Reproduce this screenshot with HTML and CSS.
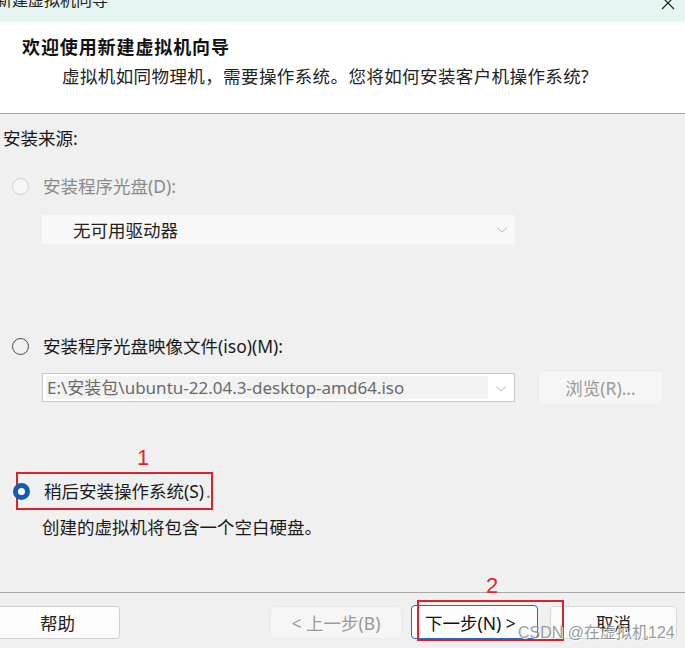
FILE: index.html
```html
<!DOCTYPE html>
<html lang="zh-CN">
<head>
<meta charset="utf-8">
<link rel="stylesheet" href="styles.css">
</head>
<body>
<div class="window">
  <div class="titlebar">
    <span class="title">新建虚拟机向导</span>
    <svg class="close" width="14" height="14" viewBox="0 0 14 14"><path d="M1 -3 L13 9 M13 -3 L1 9" stroke="#222" stroke-width="1.2" fill="none"/></svg>
  </div>
  <div class="header">
    <div class="h-title">欢迎使用新建虚拟机向导</div>
    <div class="h-sub">虚拟机如同物理机，需要操作系统。您将如何安装客户机操作系统?</div>
  </div>
  <div class="content">
    <div class="source-label">安装来源:</div>
    <div class="option opt-disc">
      <span class="radio disabled"></span>
      <span class="label muted">安装程序光盘(D):</span>
    </div>
    <div class="combo combo-disabled">
      <span class="combo-text">无可用驱动器</span>
      <svg class="chev" width="12" height="8" viewBox="0 0 12 8"><path d="M1 1.5 L6 6 L11 1.5" stroke="#b8b8b8" stroke-width="1" fill="none"/></svg>
    </div>
    <div class="option opt-iso">
      <span class="radio"></span>
      <span class="label">安装程序光盘映像文件(iso)(M):</span>
    </div>
    <div class="iso-row">
      <div class="combo combo-iso">
        <span class="combo-field">E:\安装包\ubuntu-22.04.3-desktop-amd64.iso</span>
        <svg class="chev" width="12" height="8" viewBox="0 0 12 8"><path d="M1 1.5 L6 6 L11 1.5" stroke="#b8b8b8" stroke-width="1" fill="none"/></svg>
      </div>
      <div class="btn browse">浏览(R)...</div>
    </div>
    <div class="later-wrap">
      <span class="mark mark-1">1</span>
      <div class="option opt-later">
        <span class="radio checked"></span>
        <span class="label">稍后安装操作系统(S)<span class="dot">.</span></span>
      </div>
    </div>
    <div class="desc">创建的虚拟机将包含一个空白硬盘。</div>
  </div>
  <div class="footer">
    <div class="btn help">帮助</div>
    <div class="btn back">&lt; 上一步(B)</div>
    <div class="btn next">下一步(N) &gt;</div>
    <div class="btn cancel">取消</div>
    <span class="mark mark-2">2</span>
    <span class="redbox redbox-2"></span>
    <span class="watermark">CSDN @在虚拟机124</span>
  </div>
</div>
</body>
</html>
```

FILE: styles.css
```css
* { box-sizing: border-box; }
html, body { margin: 0; padding: 0; }
body {
  width: 685px;
  height: 648px;
  overflow: hidden;
  background: #f0f0f0;
  font-family: "Noto Sans", "Noto Sans CJK SC", sans-serif;
  color: #1a1a1a;
}
.window { width: 685px; height: 648px; display: flex; flex-direction: column; }

.titlebar {
  height: 22px;
  background: #e6f5f1;
  position: relative;
  overflow: hidden;
  flex: none;
}
.title {
  display: block;
  margin-top: -10px;
  margin-left: -4px;
  font-size: 16px;
  line-height: 20px;
  color: #222;
}
.close { position: absolute; right: 10px; top: 0; }

.header {
  height: 92px;
  background: #ffffff;
  border-bottom: 1px solid #a7a7a7;
  flex: none;
  padding-top: 14px;
}
.h-title {
  margin-left: 22px;
  font-size: 18px;
  font-weight: bold;
  line-height: 22px;
  letter-spacing: 0.9px;
  color: #111;
}
.h-sub {
  margin-left: 62px;
  margin-top: 7px;
  font-size: 17.5px;
  line-height: 22px;
  letter-spacing: 0.4px;
  color: #222;
}

.content {
  flex: none;
  height: 478px;
  background: #f0f0f0;
  display: flex;
  flex-direction: column;
}
.source-label {
  margin-top: 12px;
  margin-left: 3px;
  font-size: 17.5px;
  line-height: 24px;
}
.option {
  display: flex;
  align-items: center;
  height: 24px;
  font-size: 17.5px;
}
.opt-disc { margin-top: 24px; margin-left: 12px; }
.opt-iso { margin-top: 90px; margin-left: 12px; }
.label { margin-left: 14px; line-height: 24px; white-space: nowrap; }
.label.muted { color: #8a8a8a; }

.radio {
  width: 17px;
  height: 17px;
  border-radius: 50%;
  border: 1px solid #4a4a4a;
  background: transparent;
  flex: none;
}
.radio.disabled { border-color: #cfcfcf; background: #f6f6f6; }
.radio.checked {
  border: 5px solid #0f5cb3;
  background: #ffffff;
}

.combo {
  position: relative;
  display: flex;
  align-items: center;
  height: 29px;
  width: 473px;
  margin-left: 42px;
  font-size: 17.5px;
}
.combo-disabled {
  margin-top: 17px;
  background: #f9f9f9;
}
.combo-text { margin-left: 31px; color: #222; }
.chev { position: absolute; right: 7px; top: 11px; }

.iso-row {
  margin-top: 12px;
  display: flex;
  align-items: center;
  height: 35px;
}
.combo-iso {
  height: 29px;
  border: 1px solid #c9c9c9;
  background: #ffffff;
  padding: 2px 3px;
}
.combo-field {
  display: flex;
  align-items: center;
  height: 100%;
  width: 442px;
  background: #f3f3f3;
  color: #6a6a6a;
  font-size: 17px;
  line-height: 23px;
  padding-left: 1px;
  white-space: nowrap;
}

.btn {
  display: flex;
  align-items: center;
  justify-content: center;
  height: 33px;
  border-radius: 4px;
  font-size: 17.5px;
  white-space: nowrap;
  flex: none;
}
.browse {
  margin-left: 23px;
  width: 125px;
  height: 35px;
  background: #f6f6f6;
  border: 1px solid #ececec;
  color: #9a9a9a;
}

.later-wrap {
  position: relative;
  margin-top: 67px;
  margin-left: 16px;
  width: 197px;
  height: 38px;
  border: 2px solid #d8232d;
  display: flex;
  align-items: center;
}
.opt-later { margin-left: -5px; }
.opt-later .label { margin-left: 14px; }
.dot { color: #777; margin-left: 2px; }
.mark {
  position: absolute;
  color: #e0262d;
  font-family: "Liberation Sans", sans-serif;
  font-size: 22px;
  line-height: 22px;
}
.mark-1 { left: 119px; top: -27px; }

.desc {
  margin-top: 5px;
  margin-left: 42px;
  font-size: 17.5px;
  line-height: 24px;
}

.footer {
  flex: none;
  height: 56px;
  border-top: 1.5px solid #a7a7a7;
  position: relative;
  display: flex;
  align-items: flex-start;
  padding-top: 13px;
  background: #f0f0f0;
}
.help {
  margin-left: -5px;
  width: 125px;
  background: #fdfdfd;
  border: 1px solid #d0d0d0;
  color: #222;
}
.back {
  margin-left: 150px;
  width: 132px;
  background: #f6f6f6;
  border: 1px solid #ececec;
  color: #9a9a9a;
}
.next {
  margin-left: 9px;
  width: 127px;
  height: 34px;
  margin-top: -1px;
  background: #fdfdfd;
  border: 1px solid #1f6fc0;
  color: #111;
  justify-content: flex-start;
  padding-left: 13px;
}
.cancel {
  margin-left: 12px;
  width: 127px;
  background: #fbfbfb;
  border: 1px solid #d8d8d8;
  color: #222;
}
.mark-2 { left: 486px; top: -18px; }
.redbox {
  position: absolute;
  border: 2px solid #d8232d;
}
.redbox-2 { left: 417px; top: 7px; width: 147px; height: 41px; }
.watermark {
  position: absolute;
  left: 518px;
  top: 26px;
  font-family: "Liberation Sans", "Noto Sans CJK SC", sans-serif;
  font-size: 16px;
  color: rgba(120, 120, 120, 0.75);
  text-shadow: 1px 1px 0 rgba(255,255,255,0.9);
  white-space: nowrap;
}
```
